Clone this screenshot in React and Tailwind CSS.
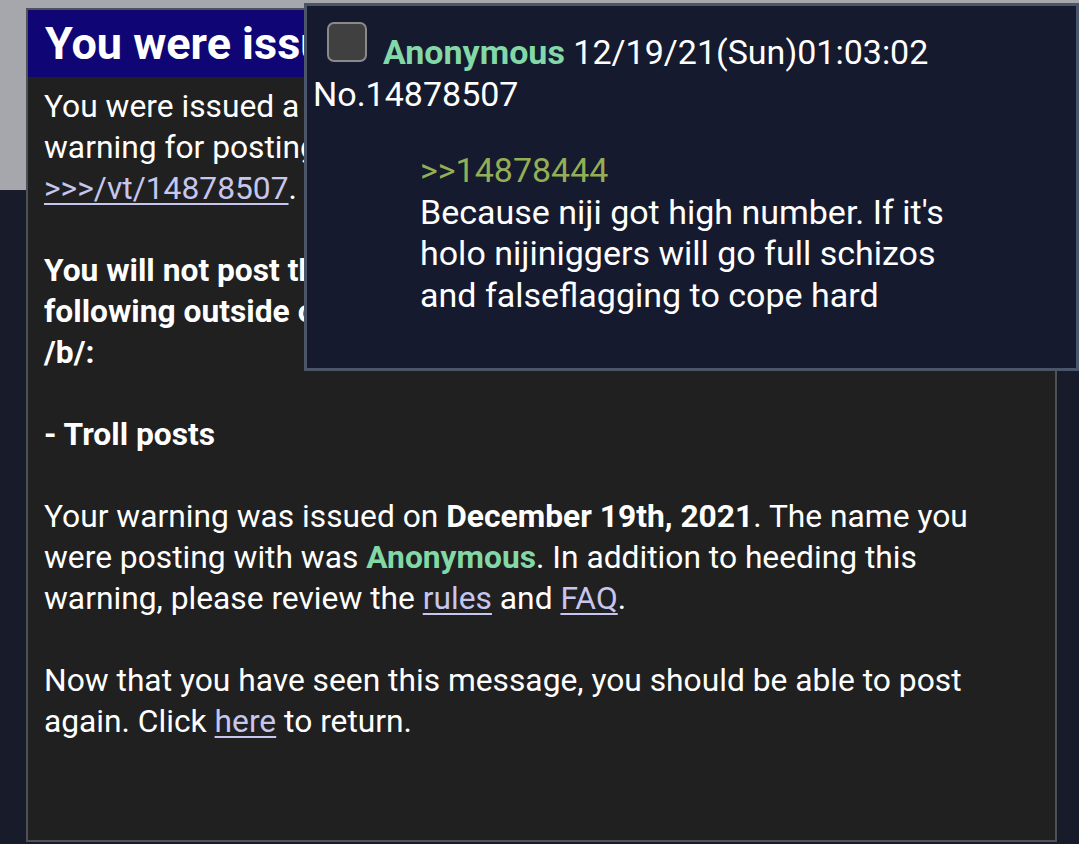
import React from "react";

const Link = ({ children }) => (
  <a href="#" className="text-[#c6c6ee] underline underline-offset-[4px] decoration-[2px]">
    {children}
  </a>
);

const QuotePopup = () => (
  <div className="absolute left-[304px] top-[3px] w-[775px] h-[368px] border-[3px] border-[#4b5569] bg-[#161a2f] pl-[6px] pt-[16px] text-[34px] leading-[41.5px] text-white">
    <div>
      <span className="inline-block align-[2px] ml-[14px] w-[40px] h-[40px] rounded-[7px] border-[2px] border-[#8a8a8a] bg-[#404040]" />
      <span className="ml-[16px] font-bold text-[#82d8a6]">Anonymous</span>{" "}
      <span>12/19/21(Sun)01:03:02</span>
    </div>
    <div>No.14878507</div>
    <div className="ml-[107px] mt-[35px]">
      <span className="text-[#93ae55]">&gt;&gt;14878444</span>
      <br />
      Because niji got high number. If it's
      <br />
      holo nijiniggers will go full schizos
      <br />
      and falseflagging to cope hard
    </div>
  </div>
);

const WarningBox = () => (
  <div className="ml-[26px] mt-[8px] w-[1031px] h-[834px] border-2 border-[#4f5157] bg-[#202020] text-white">
    <div className="flex items-center h-[67px] bg-[#0f0574] pl-[17px] text-[45px] font-bold whitespace-nowrap overflow-hidden">
      You were issued a warning! :(
    </div>
    <div className="pl-[16px] pt-[9px] text-[31.75px] leading-[41px] whitespace-nowrap">
      <div>
        You were issued a
        <br />
        warning for posting
        <br />
        <Link>&gt;&gt;&gt;/vt/14878507</Link>.
      </div>
      <div className="h-[41px]" />
      <div className="font-bold">
        You will not post the
        <br />
        following outside of
        <br />
        /b/:
        <br />
        <br />
        - Troll posts
      </div>
      <div className="h-[41px]" />
      <div>
        Your warning was issued on <b>December 19th, 2021</b>. The name you
        <br />
        were posting with was <b className="text-[#82d8a6]">Anonymous</b>. In addition to heeding this
        <br />
        warning, please review the <Link>rules</Link> and <Link>FAQ</Link>.
      </div>
      <div className="h-[41px]" />
      <div>
        Now that you have seen this message, you should be able to post
        <br />
        again. Click <Link>here</Link> to return.
      </div>
    </div>
  </div>
);

export default function App() {
  return (
    <div className="relative w-[1079px] h-[844px] overflow-hidden font-['Roboto',sans-serif] bg-[linear-gradient(#a5a7ad_190px,#181c2a_190px)]">
      <WarningBox />
      <QuotePopup />
    </div>
  );
}
